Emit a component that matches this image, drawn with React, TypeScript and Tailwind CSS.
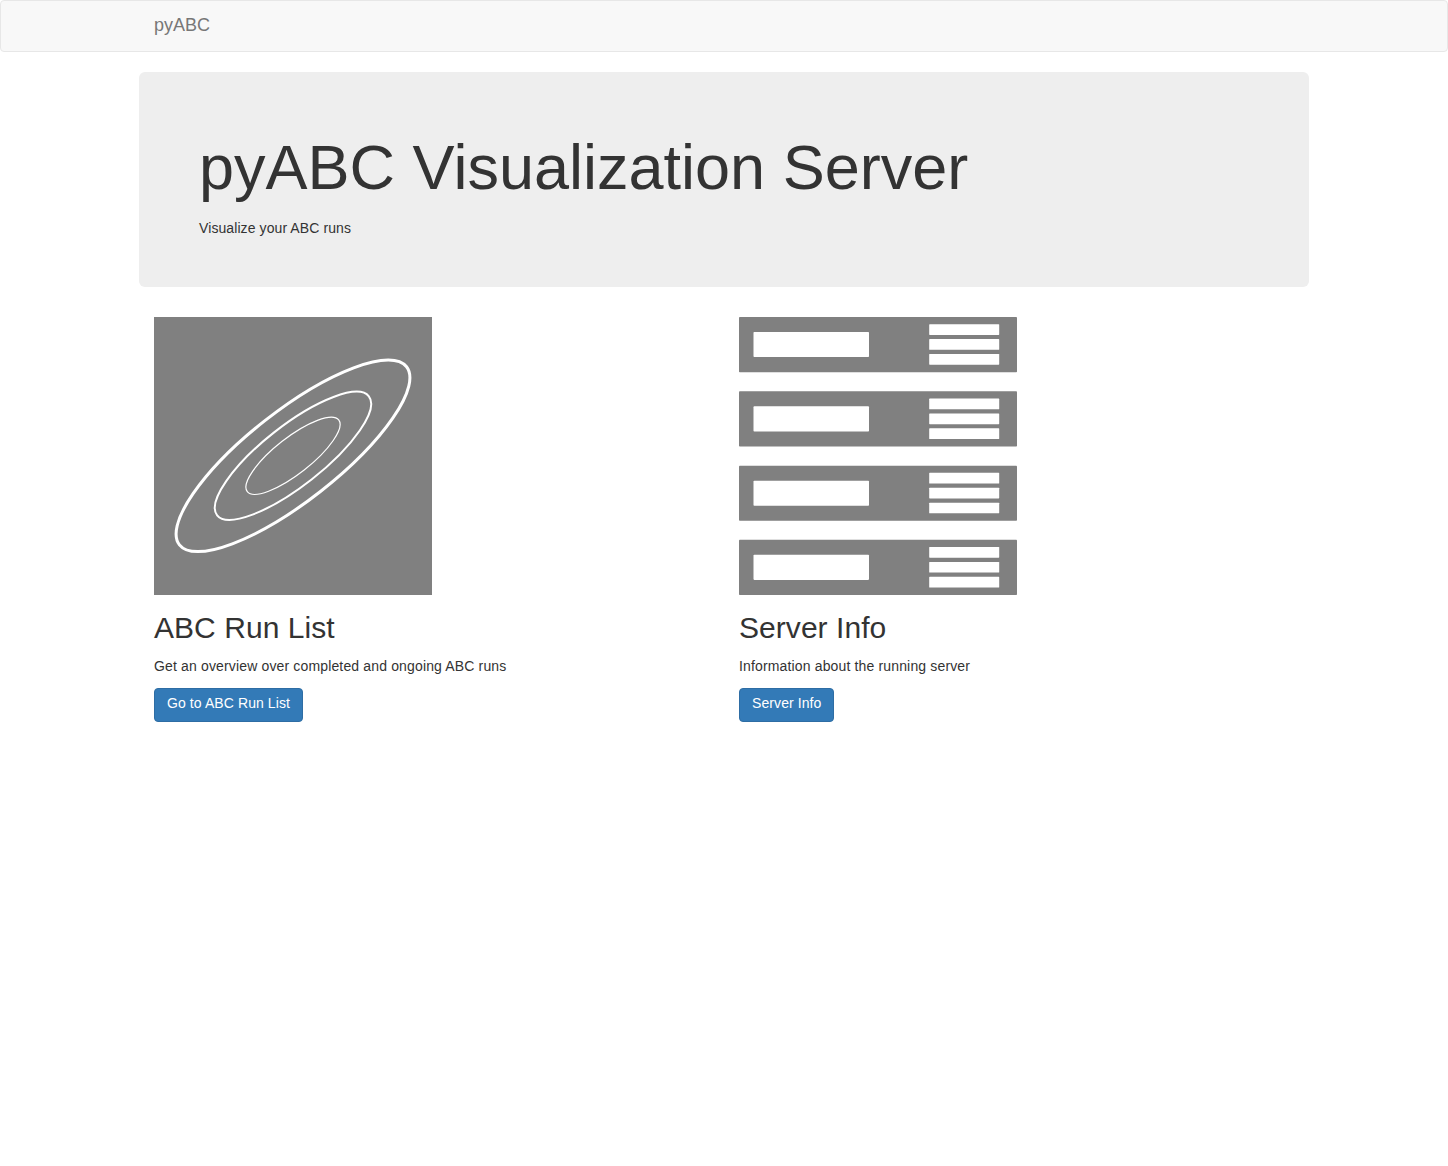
import type { ReactNode } from "react";

const units = [0, 74.33, 148.66, 222.8];

function Rings() {
  return (
    <svg className="block h-[278px] w-[278px]" viewBox="0 0 278 278">
      <rect width="278" height="278" fill="#808080" />
      <g fill="none" stroke="#fff">
        <ellipse cx="139" cy="138.8" rx="144.3" ry="45" strokeWidth="3" transform="rotate(-38.1 139 138.8)" />
        <ellipse cx="139" cy="138.8" rx="96.4" ry="30.1" strokeWidth="2" transform="rotate(-38.1 139 138.8)" />
        <ellipse cx="139" cy="138.8" rx="58.1" ry="18.1" strokeWidth="1.2" transform="rotate(-38.1 139 138.8)" />
      </g>
    </svg>
  );
}

function Servers() {
  return (
    <svg className="block h-[278px] w-[278px]" viewBox="0 0 278 278">
      {units.map((y) => (
        <g key={y} transform={`translate(0 ${y})`}>
          <rect width="278" height="55.2" rx="0.8" fill="#808080" />
          <g fill="#fff">
            <rect x="14.5" y="15" width="115.5" height="25.1" rx="0.8" />
            <rect x="190.2" y="7.2" width="70" height="10.7" rx="0.6" />
            <rect x="190.2" y="22.1" width="70" height="10.7" rx="0.6" />
            <rect x="190.2" y="37" width="70" height="10.7" rx="0.6" />
          </g>
        </g>
      ))}
    </svg>
  );
}

function Card({ art, title, text, action }: { art: ReactNode; title: string; text: string; action: string }) {
  return (
    <section className="w-1/2 px-[15px]">
      {art}
      <h2 className="mt-4 mb-3 text-[30px] leading-[33px] font-normal tracking-[0.05px]">{title}</h2>
      <p className="mb-3 tracking-[0.15px]">{text}</p>
      <a href="#" className="inline-block h-[34px] rounded border border-[#2e6da4] bg-[#337ab7] px-3 pt-1 tracking-[0.09px] text-white">
        {action}
      </a>
    </section>
  );
}

export default function App() {
  return (
    <div className="min-h-screen bg-white font-['Liberation_Sans',Arial,sans-serif] text-[14px] leading-5 text-[#333]">
      <nav className="mb-5 h-[52px] rounded border border-[#e7e7e7] bg-[#f8f8f8]">
        <div className="mx-auto w-[1170px] px-[15px] pt-3.5">
          <a href="#" className="inline-block text-[18px] leading-5 text-[#777]">pyABC</a>
        </div>
      </nav>
      <main className="mx-auto w-[1170px]">
        <header className="mb-[30px] h-[215px] rounded-md bg-[#eee] px-[60px] pt-[61px]">
          <h1 className="text-[63px] leading-[69px] font-normal">pyABC Visualization Server</h1>
          <p className="mt-4 tracking-[0.09px]">Visualize your ABC runs</p>
        </header>
        <div className="flex">
          <Card art={<Rings />} title="ABC Run List" text="Get an overview over completed and ongoing ABC runs" action="Go to ABC Run List" />
          <Card art={<Servers />} title="Server Info" text="Information about the running server" action="Server Info" />
        </div>
      </main>
    </div>
  );
}
